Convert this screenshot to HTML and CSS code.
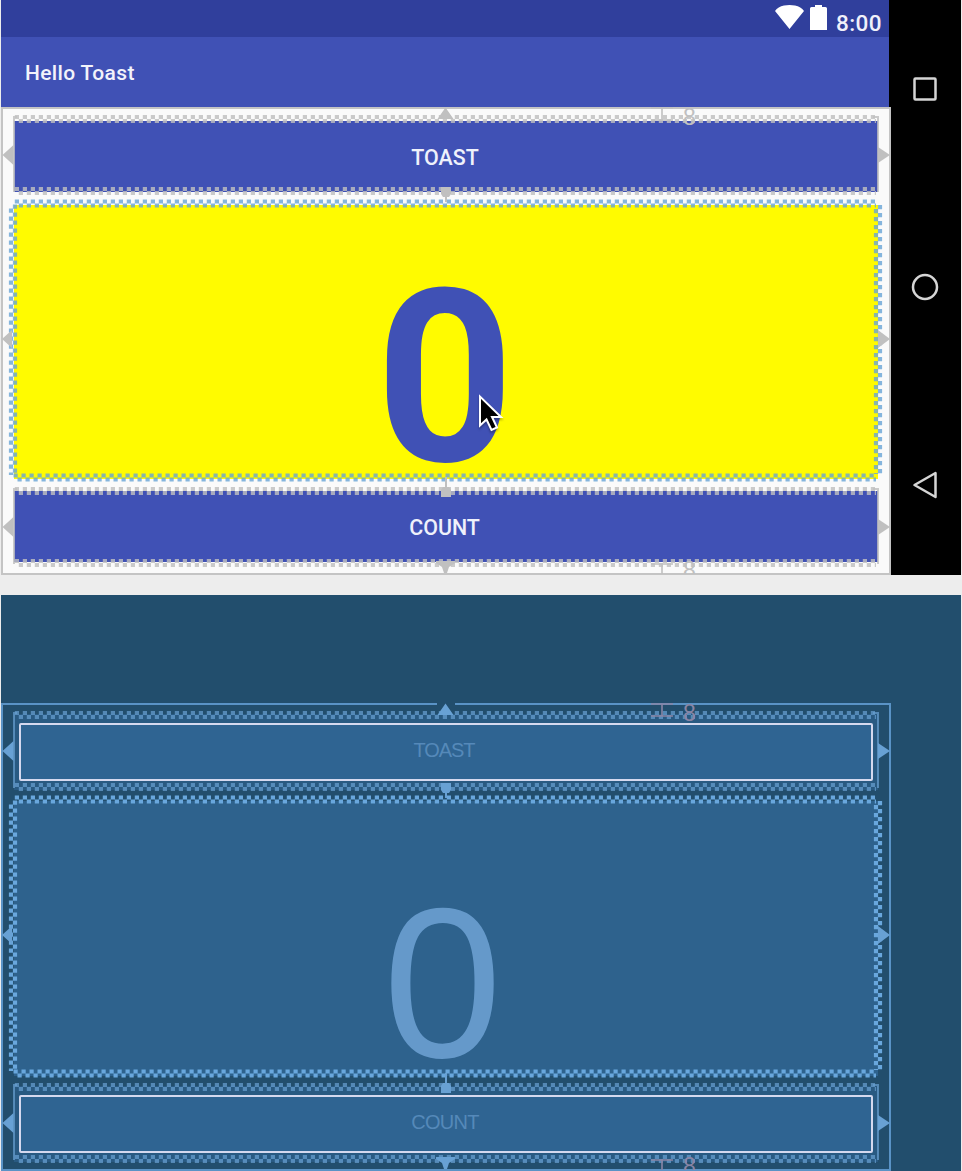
FILE: index.html
```
<!DOCTYPE html>
<html lang="en">
<head>
<meta charset="utf-8">
<title>Hello Toast</title>
<link rel="stylesheet" href="styles.css">
</head>
<body>
<svg class="defs" width="0" height="0">
  <defs>
    <clipPath id="content"><rect x="1" y="107" width="890" height="467"/></clipPath>
    <symbol id="constraints" viewBox="0 0 962 575">
      <g class="frame">
        <path d="M2 107V575M890 107V575M1 574H891"/>
        <path class="frame-top" d="M1 108H891"/>
      </g>
      <g class="zig-button">
        <path d="M14.800 117H876M18.800 121H876M14.800 189H876M18.800 193H876"/>
        <path d="M14.800 489H876M18.800 493H876M14.800 561H876M18.800 565H876"/>
      </g>
      <path class="sides" d="M17 117H14V192M873 117H878V192M17 489H14V564M873 489H878V564"/>
      <g class="zig-count">
        <path d="M14.800 201.500H876M18.800 205.500H876M13.500 475.500H876M17.500 479.500H876"/>
        <path d="M15 204.500V474M11 208.500V475M876 209V474M880 205V474"/>
      </g>
      <g class="arrow">
        <path d="M2.500 155L13.500 145V165ZM890 155L878 147V163ZM2.500 527L13.500 517V537ZM890 527L878 519V535Z"/>
        <path d="M2 339L12 330V348ZM890 339L878 330V348Z"/>
        <path d="M445.500 107.500L453.500 119H437.500ZM436 561H455V563L449 567L447 573H444L442 567L436 563Z"/>
        <path d="M441 187H451V194L449 197H447V202H445V197H443L441 194ZM445 477H447V487H449L451 490V497H441V490L443 487H445Z"/>
      </g>
      <g class="margin" clip-path="url(#content)">
        <path d="M651 108H673M662 108V120M651 120H673M651 564H673M662 564V574"/>
        <text x="683" y="125">8</text>
        <text x="683" y="578">8</text>
      </g>
    </symbol>
  </defs>
</svg>

<main class="editor">
  <section class="surface design">
    <div class="screen">
      <div class="status">
        <svg class="wifi" width="29" height="24" viewBox="0 0 29 24"><path d="M0 6Q3 1.500 9 .5Q14.500-.5 20 .5Q26 1.500 29 6L14.500 24Z"/></svg>
        <svg class="battery" width="17" height="25" viewBox="0 0 17 25"><path d="M5 0H12V2H15.500Q17 2 17 3.500V25H0V3.500Q0 2 1.500 2H5Z"/></svg>
        <span class="clock">8:00</span>
      </div>
      <header class="appbar">Hello Toast</header>
      <div class="layout">
        <div class="button"><span class="toast">TOAST</span></div>
        <div class="count"><span class="zero">0</span></div>
        <div class="button last"><span class="counter">COUNT</span></div>
      </div>
    </div>
    <nav class="navbar">
      <svg width="28" height="32" viewBox="0 0 28 32"><rect x="3.500" y="5.500" width="21" height="21" rx="1"/></svg>
      <svg width="28" height="32" viewBox="0 0 28 32"><circle cx="14" cy="16" r="12"/></svg>
      <svg width="28" height="32" viewBox="0 0 28 32"><path d="M3.500 16L24.500 4V28Z"/></svg>
    </nav>
    <svg class="overlay" width="962" height="575"><use href="#constraints" width="962" height="575"/></svg>
    <svg class="cursor" width="28" height="42" viewBox="0 0 28 42"><path d="M4 3.500V32.500L10.500 26.500L15.500 37L21 34.500L16 24H25Z"/></svg>
  </section>

  <section class="surface blueprint">
    <div class="screen">
      <div class="layout">
        <div class="button"><span class="toast">TOAST</span></div>
        <div class="count"><span class="zero">0</span></div>
        <div class="button last"><span class="counter">COUNT</span></div>
      </div>
    </div>
    <svg class="overlay" width="962" height="575"><use href="#constraints" width="962" height="575"/></svg>
  </section>
</main>
</body>
</html>
```
FILE: styles.css
```
* { box-sizing: border-box; }
body {
  margin: 0;
  background: #ededed;
  font-family: Roboto, "Liberation Sans", sans-serif;
}
.defs { display: block; }
.editor {
  display: flex;
  flex-direction: column;
  gap: 20px;
  height: 1171px;
  overflow: hidden;
  padding: 0 1px;
}
.surface { position: relative; display: flex; flex: none; }
.screen { width: 888px; display: flex; flex-direction: column; }

/* Design surface */
.design {
  height: 575px;
  --frame: #c4c4c4;
  --zig: rgba(192, 192, 192, .82);
  --zig-count: rgba(104, 164, 214, .8);
  --arrow: #c0c0c0;
  --margin: #c0c0c0;
}
.status {
  height: 37px;
  background: #303f9c;
  display: flex;
  justify-content: flex-end;
  align-items: flex-start;
  padding: 5px 7px 0 0;
  color: #f0f1fa;
}
.status svg { fill: #fff; }
.battery { margin-left: 6px; }
.clock {
  width: 46px;
  margin-left: 9px;
  padding-top: 5px;
  font-size: 22.5px;
  line-height: 26px;
  font-weight: 500;
  letter-spacing: .4px;
  white-space: nowrap;
}
.appbar {
  height: 70px;
  padding-left: 24px;
  background: #4051b5;
  color: #f2f3fb;
  font-size: 21px;
  font-weight: 500;
  line-height: 72px;
  letter-spacing: .35px;
}
.layout {
  height: 468px;
  display: flex;
  flex-direction: column;
  padding: 14px 11px 0 13px;
}
.design .layout { background: #fafafa; width: 890px; padding-right: 13px; }
.button {
  display: flex;
  align-items: center;
  justify-content: center;
  height: 71px;
  flex: none;
}
.design .button {
  background: #4051b5;
  color: #eff1fb;
  font-size: 21.4px;
  font-weight: 500;
  padding: 1px 2px 0 0;
}
.design .last { padding-right: 3px; }
.count {
  display: flex;
  align-items: flex-start;
  justify-content: center;
  height: 274px;
  margin: 13px 0 12px;
}
.design .count { background: #fffb00; color: #4051b5; padding-right: 2px; }
.design .zero {
  font-size: 241px;
  font-weight: 700;
  line-height: 200px;
  margin-top: 74px;
}
.navbar {
  width: 72px;
  background: #000;
  display: flex;
  flex-direction: column;
  align-items: center;
  gap: 166px;
  padding-top: 73px;
}
.navbar svg { flex: none; fill: none; stroke: #d5d5d5; stroke-width: 2.5; stroke-linejoin: round; }

/* Blueprint surface */
.blueprint {
  height: 576px;
  background: #224e6d;
  font-family: "Liberation Sans", sans-serif;
  color: #5589b9;
  --frame: #5a93c6;
  --zig: rgba(104, 160, 209, .72);
  --zig-count: #69a7dd;
  --arrow: #68a1d4;
  --margin: #8985a5;
}
.blueprint .screen { padding-top: 108px; }
.blueprint .layout { padding-top: 11px; }
.blueprint .button {
  height: 76px;
  padding: 9px 5px;
  background: #295a82;
}
.blueprint .button span {
  flex: 1;
  height: 58px;
  border: 2px solid #d5d9ef;
  border-radius: 2px;
  background: #2f6492;
  text-align: center;
  font-size: 20px;
  line-height: 51px;
}
.blueprint .button .toast { letter-spacing: -1.1px; padding-right: 4px; }
.blueprint .button .counter { letter-spacing: -.7px; padding-right: 2px; }
.blueprint .count {
  height: 275px;
  margin: 11px 0 10px;
  background: #2e628d;
  padding-right: 7px;
}
.blueprint .zero {
  color: #6599ca;
  font-size: 214px;
  line-height: 180px;
  margin-top: 92px;
}

/* Constraint overlay */
.overlay { position: absolute; left: -1px; top: 0; pointer-events: none; }
.blueprint .overlay { top: 1px; }
.frame { stroke: var(--frame); stroke-width: 2; }
.blueprint { --top-gap: 436 18 436; }
.frame-top { stroke-dasharray: var(--top-gap, none); }
.sides { fill: none; stroke: var(--zig); stroke-width: 2; }
.zig-button { fill: none; stroke: var(--zig); stroke-width: 4.2; stroke-dasharray: 4.2 3.8; }
.zig-count { fill: none; stroke: var(--zig-count); stroke-width: 4.2; stroke-dasharray: 4.2 3.8; }
.arrow { fill: var(--arrow); }
.margin path { stroke: var(--margin); stroke-width: 1.6; }
.margin text { fill: var(--margin); font: 23px "Liberation Sans", sans-serif; }
.cursor { position: absolute; left: 475px; top: 393px; filter: drop-shadow(0 2px 1px rgba(0, 0, 0, .3)); }
.cursor path { fill: #000; stroke: #fff; stroke-width: 2; }
```
